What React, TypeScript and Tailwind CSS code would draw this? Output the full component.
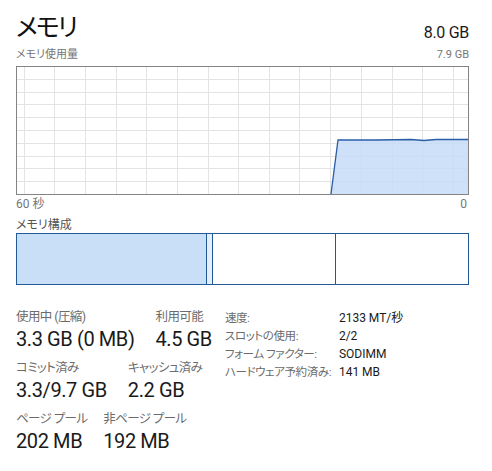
import React from "react";

const FONT = {
  fontFamily: 'Roboto, "Noto Sans CJK JP", sans-serif',
  fontFeatureSettings: '"palt"',
};

function Graph() {
  const W = 453;
  const H = 129;
  const vx = [8, 38, 69, 100, 130, 161, 192, 222, 253, 283, 314, 345, 376, 406, 437];
  const hy = [1, 2, 3, 4, 5, 6, 7, 8, 9].map((k) => Math.round(k * 12.8) + 0.5);
  const area = "315,128 322,74 360,74 395,73.5 408,74.5 420,73.5 452,73.5 452,128";
  const line = "315,128 322,74 360,74 395,73.5 408,74.5 420,73.5 452,73.5";
  return (
    <svg width={W} height={H} viewBox={`0 0 ${W} ${H}`} className="block">
      <rect x={0} y={0} width={W} height={H} fill="#ffffff" />
      {vx.map((x) => (
        <line key={"v" + x} x1={x + 0.5} y1={0} x2={x + 0.5} y2={H} stroke="#e3e3e3" strokeWidth={1} />
      ))}
      {hy.map((y) => (
        <line key={"h" + y} x1={0} y1={y} x2={W} y2={y} stroke="#e3e3e3" strokeWidth={1} />
      ))}
      <polygon points={area} fill="#c5dcf7" fillOpacity={0.85} />
      <polyline points={line} fill="none" stroke="#2a5ea8" strokeWidth={1.3} />
      <rect x={0.5} y={0.5} width={W - 1} height={H - 1} fill="none" stroke="#838383" strokeWidth={1} />
    </svg>
  );
}

function Stat({ label, value }: { label: string; value: string }) {
  return (
    <div className="flex flex-col">
      <div className="h-[17px] w-0 text-[12.5px] leading-[17px] tracking-[-0.6px] text-[#6b6b6b] whitespace-nowrap">{label}</div>
      <div className="text-[20px] leading-[28px] tracking-[-0.4px] text-[#1a1a1a] whitespace-nowrap">{value}</div>
    </div>
  );
}

export default function App() {
  const rows: [string, string][] = [
    ["速度:", "2133 MT/秒"],
    ["スロットの使用:", "2/2"],
    ["フォーム ファクター:", "SODIMM"],
    ["ハードウェア予約済み:", "141 MB"],
  ];
  return (
    <div className="w-[492px] h-[471px] bg-white pl-4 pr-[23px] pt-[9px] overflow-hidden" style={FONT}>
      <div className="flex justify-between items-end">
        <div className="text-[25px] leading-[38px] tracking-[-2px] text-[#111]">メモリ</div>
        <div className="text-[16px] leading-[24px] tracking-[-0.3px] text-[#1a1a1a] mb-[2px]">8.0 GB</div>
      </div>
      <div className="flex justify-between text-[11px] leading-[16px] text-[#767676]">
        <span>メモリ使用量</span>
        <span>7.9 GB</span>
      </div>
      <div className="mt-[3px]">
        <Graph />
      </div>
      <div className="flex justify-between text-[12px] leading-[16px] text-[#767676] mt-[1px] pr-[2px]">
        <span>60 秒</span>
        <span>0</span>
      </div>
      <div className="text-[12px] leading-[16px] text-[#555] mt-[5px]">メモリ構成</div>
      <div className="flex h-[52px] border border-[#215a96] mt-[0px]">
        <div className="w-[190px] bg-[#c9dff8] border-r border-[#215a96]"></div>
        <div className="w-[6px] bg-[#e3eefc] border-r border-[#215a96]"></div>
        <div className="w-[123px] bg-white border-r border-[#215a96]"></div>
        <div className="flex-1 bg-white"></div>
      </div>
      <div className="flex mt-[23px]">
        <div className="flex flex-col gap-[6px]">
          <div className="flex gap-[21px]">
            <Stat label="使用中 (圧縮)" value="3.3 GB (0 MB)" />
            <Stat label="利用可能" value="4.5 GB" />
          </div>
          <div className="flex gap-[21px]">
            <Stat label="コミット済み" value="3.3/9.7 GB" />
            <Stat label="キャッシュ済み" value="2.2 GB" />
          </div>
          <div className="flex gap-[21px]">
            <Stat label="ページ プール" value="202 MB" />
            <Stat label="非ページ プール" value="192 MB" />
          </div>
        </div>
        <div className="ml-[13px] flex flex-col pt-[1px]">
          {rows.map(([k, v]) => (
            <div key={k} className="flex text-[12px] leading-[18px]">
              <span className="w-[114px] text-[11.5px] tracking-[-0.4px] text-[#6b6b6b] whitespace-nowrap">{k}</span>
              <span className="text-[#1a1a1a] whitespace-nowrap">{v}</span>
            </div>
          ))}
        </div>
      </div>
    </div>
  );
}
